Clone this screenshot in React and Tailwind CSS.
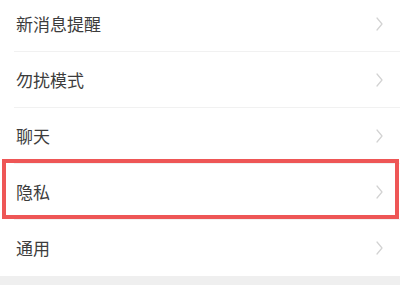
import React from 'react';

const items = ['新消息提醒', '勿扰模式', '聊天', '隐私', '通用'];

function Chevron() {
  return (
    <svg width="7" height="14" viewBox="0 0 7 14" fill="none" className="shrink-0">
      <path d="M1 1 L6 7 L1 13" stroke="#d2d2d2" strokeWidth="1.2" strokeLinecap="round" strokeLinejoin="round" />
    </svg>
  );
}

export default function App() {
  return (
    <div
      className="w-[400px] h-[300px] bg-white overflow-hidden"
      style={{ fontFamily: '"Noto Sans CJK SC", "Noto Sans", sans-serif' }}
    >
      <div className="-mt-[4px]">
        {items.map((label, i) => (
          <div key={label} className="relative">
            <div className="h-[55px] flex items-center justify-between pl-[16px] pr-[17px]">
              <span className="text-[17px] text-[#3c3c3c] leading-none">{label}</span>
              <Chevron />
            </div>
            {i < items.length - 1 && <div className="ml-[14px] h-px bg-[#f1f1f1]" />}
            {label === '隐私' && (
              <div className="absolute left-[2px] right-[1px] top-[-5px] bottom-[1px] border-[4px] border-[#ee5656] pointer-events-none" />
            )}
          </div>
        ))}
        <div className="h-[9px] bg-[#efefef] mt-px" />
      </div>
    </div>
  );
}
